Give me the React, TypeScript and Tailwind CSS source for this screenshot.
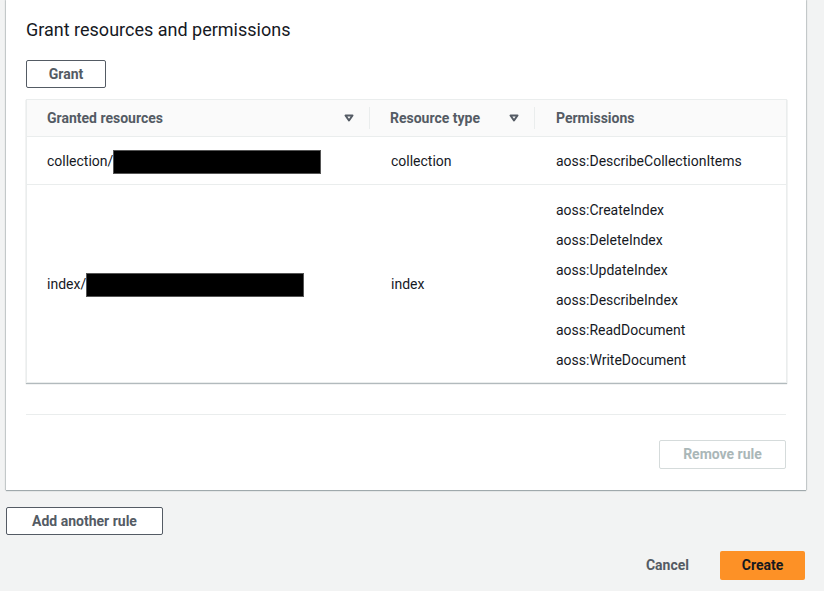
import React from "react";

const PERMS = [
  "aoss:CreateIndex",
  "aoss:DeleteIndex",
  "aoss:UpdateIndex",
  "aoss:DescribeIndex",
  "aoss:ReadDocument",
  "aoss:WriteDocument",
];

function SortIcon() {
  return (
    <svg width="12" height="12" viewBox="0 0 12 12" className="shrink-0">
      <path d="M2.5 3.5h7L6 8.5z" fill="none" stroke="#545b64" strokeWidth="2" strokeLinejoin="round" />
    </svg>
  );
}

function Redacted({ w }: { w: number }) {
  return <span className="inline-block h-[24px] bg-black border border-[#555]" style={{ width: w }} />;
}

export default function App() {
  return (
    <div
      className="min-h-[591px] bg-[#f2f3f3] text-[#16191f] text-[14px]"
      style={{ fontFamily: "Roboto, 'Open Sans', sans-serif" }}
    >
      {/* Rule card */}
      <div className="ml-[6px] w-[800px] bg-white px-[20px] pt-[19px] pb-[21px] shadow-[0_1px_1px_0_rgba(0,28,36,0.3),1px_0_1px_0_rgba(0,28,36,0.15),-1px_0_1px_0_rgba(0,28,36,0.15)]">
        <h2 className="text-[18px] leading-[22px] text-[#16191f]">Grant resources and permissions</h2>

        <button className="mt-[19px] h-[28px] w-[80px] rounded-[2px] border border-[#545b64] font-bold text-[#545b64]">
          Grant
        </button>

        <div className="mt-[11px] w-[761px] border border-[#eaeded] bg-white shadow-[0_1px_1px_0_rgba(0,28,36,0.3)]">
          {/* header */}
          <div className="flex h-[37px] bg-[#fafafa] border-b border-[#eaeded] font-bold text-[#545b64]">
            <div className="flex w-[343px] items-center pl-[20px]">
              <span className="flex-1">Granted resources</span>
              <SortIcon />
              <span className="ml-[14px] h-[22px] w-px bg-[#eaeded]" />
            </div>
            <div className="flex w-[165px] items-center pl-[20px]">
              <span className="flex-1">Resource type</span>
              <SortIcon />
              <span className="ml-[14px] h-[22px] w-px bg-[#eaeded]" />
            </div>
            <div className="flex flex-1 items-center pl-[21px]">Permissions</div>
          </div>

          {/* row 1 */}
          <div className="flex h-[48px] items-center border-b border-[#eaeded] pt-[2px]">
            <div className="flex w-[343px] items-center pl-[20px]">
              <span>collection/</span>
              <Redacted w={208} />
            </div>
            <div className="w-[165px] pl-[21px]">collection</div>
            <div className="flex-1 pl-[21px]">aoss:DescribeCollectionItems</div>
          </div>

          {/* row 2 */}
          <div className="flex h-[197px] items-center pt-[2px]">
            <div className="flex w-[343px] items-center pl-[20px]">
              <span>index/</span>
              <Redacted w={218} />
            </div>
            <div className="w-[165px] pl-[21px]">index</div>
            <div className="flex flex-1 flex-col pl-[21px] leading-[30px]">
              {PERMS.map((p) => (
                <span key={p}>{p}</span>
              ))}
            </div>
          </div>
        </div>

        <div className="mt-[31px] h-px w-[760px] bg-[#eaeded]" />

        <div className="mt-[25px] flex w-[760px] justify-end">
          <button className="h-[29px] w-[127px] rounded-[2px] border border-[#d5dbdb] font-bold text-[#aab7b8]">
            Remove rule
          </button>
        </div>
      </div>

      <button className="ml-[6px] mt-[17px] h-[28px] w-[157px] rounded-[2px] border border-[#545b64] bg-white font-bold text-[#545b64]">
        Add another rule
      </button>

      <div className="mt-[16px] flex w-[805px] items-center justify-end">
        <button className="h-[29px] px-[31px] font-bold text-[#545b64]">Cancel</button>
        <button className="h-[29px] w-[85px] rounded-[2px] bg-[#fd9126] font-bold text-[#16191f]">Create</button>
      </div>
    </div>
  );
}
